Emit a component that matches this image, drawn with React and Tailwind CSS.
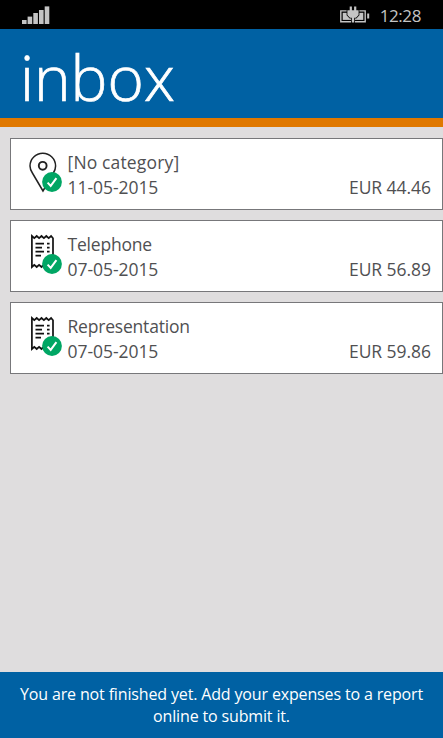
const expenses = [
  { id: 1, category: "[No category]", date: "11-05-2015", amount: "EUR 44.46", icon: "pin" },
  { id: 2, category: "Telephone", date: "07-05-2015", amount: "EUR 56.89", icon: "receipt" },
  { id: 3, category: "Representation", date: "07-05-2015", amount: "EUR 59.86", icon: "receipt" },
];

const SignalIcon = () => (
  <svg width="28" height="18" viewBox="0 0 28 18" fill="#c4c4c4">
    <rect x="0" y="14" width="4.6" height="4" />
    <rect x="5.6" y="10.6" width="4.6" height="7.4" />
    <rect x="11.3" y="7" width="4.6" height="11" />
    <rect x="17" y="4" width="4.6" height="14" />
    <rect x="22.7" y="0.4" width="4.6" height="17.6" />
  </svg>
);

const BatteryIcon = () => (
  <svg width="30" height="18" viewBox="0 0 30 18">
    <path d="M7.5 4.9H.8V15.8H25.2V4.9H18.5" fill="none" stroke="#c4c4c4" strokeWidth="1.4" />
    <rect x="27.2" y="7.5" width="2" height="5" fill="#c4c4c4" />
    <path d="M2.7 6.8H23.3V13.9H2.7Z" fill="#c4c4c4" />
    <path
      d="M9.7 .6H11.9V4.3H14.1V.6H16.3V4.3H18.6V9L16 11.8H14.2V16.6H11.8V11.8H10L7.4 9V4.3H9.7Z"
      fill="#c4c4c4"
      stroke="#000"
      strokeWidth="1.6"
      paintOrder="stroke"
    />
  </svg>
);

const PinIcon = () => (
  <svg width="34" height="42" viewBox="0 0 34 42" fill="none" stroke="#222" strokeWidth="1.5">
    <path d="M14 39L3.4 21C1.6 18.3 1 16.5 1 14A12.8 12.8 0 0 1 26.6 14C26.6 16.5 26 18.3 24.4 21Z" />
    <circle cx="13.7" cy="13.8" r="3.9" strokeWidth="1.9" />
  </svg>
);

const ReceiptIcon = () => (
  <svg width="34" height="42" viewBox="0 0 34 42" fill="none" stroke="#111" strokeWidth="1.7">
    <path d="M2.9 2L5.3 4.2L7.7 2L10.1 4.2L12.5 2L14.9 4.2L17.3 2L19.7 4.2L22.1 2L24 4.2V31L22.1 33L19.7 30.8L17.3 33L14.9 30.8L12.5 33L10.1 30.8L7.7 33L5.3 30.8L2.9 33Z" />
    <path strokeWidth="1.6" d="M6.5 9.6H15M6.5 13.6H13M6.5 17.6H15M6.5 21.6H12M18 9.6H20.6M18 13.6H20.6M18 17.6H20.6" />
  </svg>
);

const CheckBadge = () => (
  <svg className="absolute left-[13px] top-[20px]" width="20" height="20" viewBox="0 0 20 20">
    <circle cx="10" cy="10" r="9.9" fill="#00a664" />
    <path d="M5.6 10.6L8.7 13.9L14.4 6.2" fill="none" stroke="#fff" strokeWidth="2" />
  </svg>
);

const ExpenseCard = ({ expense }) => (
  <li className="flex h-[72px] border border-[#77777a] bg-white pl-[18px] pr-[11px] pt-[12px] text-[#505052]">
    <div className="relative mr-[4.5px] mt-px w-[34px] shrink-0">
      {expense.icon === "pin" ? <PinIcon /> : <ReceiptIcon />}
      <CheckBadge />
    </div>
    <div className="flex-1 text-[17.5px] leading-[25px] -mt-[1px]">
      <p className={expense.icon === "pin" ? "tracking-[0.15px]" : "tracking-[-0.2px]"}>{expense.category}</p>
      <div className="flex justify-between">
        <span className="tracking-[-0.05px]">{expense.date}</span>
        <span className="tracking-[-0.05px]">{expense.amount}</span>
      </div>
    </div>
  </li>
);

const App = () => {
  return (
    <div className="flex h-screen flex-col overflow-hidden bg-[#dfddde] font-['Open_Sans','Noto_Sans',sans-serif]">
      <div className="flex h-[29px] shrink-0 items-start justify-between bg-black pl-[22px] pr-[22px] pt-[6px]">
        <SignalIcon />
        <div className="flex items-start gap-[10px] text-[#c4c4c4]">
          <BatteryIcon />
          <span className="text-[17px] leading-[20px] tracking-[-0.4px]">12:28</span>
        </div>
      </div>

      <header className="h-[98px] shrink-0 border-b-9 border-[#e07800] bg-[#0061a3] pl-[20px]">
        <h1 className="pt-[10px] text-[62px] leading-[76px] font-light text-white [-webkit-text-stroke:0.7px_white]">inbox</h1>
      </header>

      <ul className="flex flex-1 flex-col gap-[10px] pl-[10px] pt-[10.5px]">
        {expenses.map((expense) => (
          <ExpenseCard key={expense.id} expense={expense} />
        ))}
      </ul>

      <footer className="h-[66px] shrink-0 bg-[#0061a3] pt-[11px] text-center text-[16px] leading-[22px] tracking-[-0.15px] text-white">
        You are not finished yet. Add your expenses to a report
        <br />
        online to submit it.
      </footer>
    </div>
  );
};

export default App;
